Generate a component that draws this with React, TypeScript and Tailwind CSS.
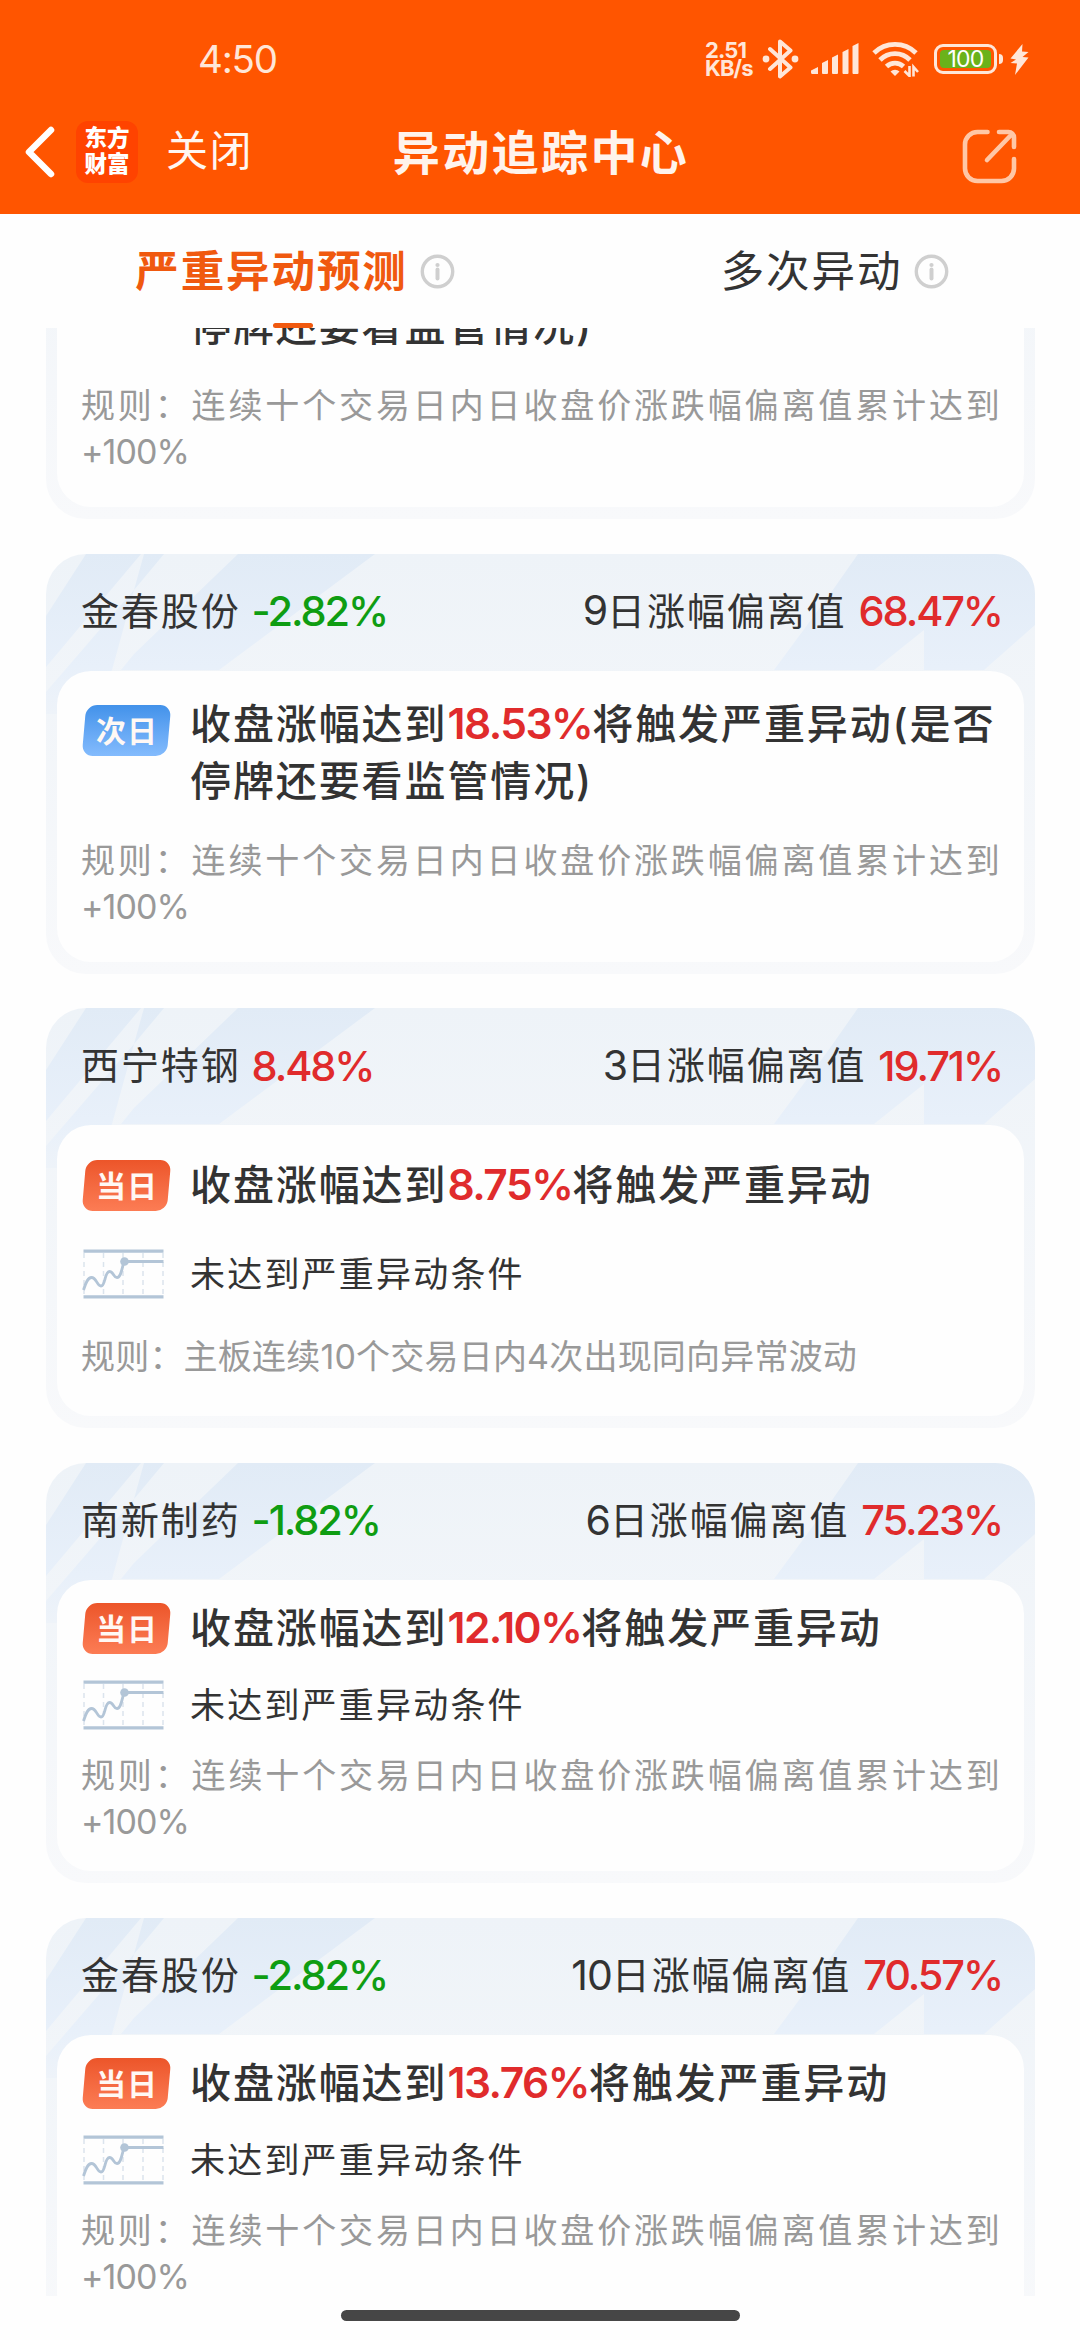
import { useState } from 'react';

type Layout = 'wrapped' | 'loose' | 'tight';

interface Alert {
  id: number;
  name: string;
  change: string;
  days: number;
  deviation: string;
  day: '当日' | '次日';
  target: string;
  suffix: string;
  status?: string;
  rule: string;
  threshold?: string;
  layout: Layout;
}

const RULE_TEN_DAYS = '连续十个交易日内日收盘价涨跌幅偏离值累计达到';

const alerts: Alert[] = [
  {
    id: 1,
    name: '金春股份',
    change: '-2.82%',
    days: 9,
    deviation: '68.47%',
    day: '次日',
    target: '18.53%',
    suffix: '将触发严重异动(是否停牌还要看监管情况)',
    rule: RULE_TEN_DAYS,
    threshold: '+100%',
    layout: 'wrapped',
  },
  {
    id: 2,
    name: '金春股份',
    change: '-2.82%',
    days: 9,
    deviation: '68.47%',
    day: '次日',
    target: '18.53%',
    suffix: '将触发严重异动(是否停牌还要看监管情况)',
    rule: RULE_TEN_DAYS,
    threshold: '+100%',
    layout: 'wrapped',
  },
  {
    id: 3,
    name: '西宁特钢',
    change: '8.48%',
    days: 3,
    deviation: '19.71%',
    day: '当日',
    target: '8.75%',
    suffix: '将触发严重异动',
    status: '未达到严重异动条件',
    rule: '主板连续10个交易日内4次出现同向异常波动',
    layout: 'loose',
  },
  {
    id: 4,
    name: '南新制药',
    change: '-1.82%',
    days: 6,
    deviation: '75.23%',
    day: '当日',
    target: '12.10%',
    suffix: '将触发严重异动',
    status: '未达到严重异动条件',
    rule: RULE_TEN_DAYS,
    threshold: '+100%',
    layout: 'tight',
  },
  {
    id: 5,
    name: '金春股份',
    change: '-2.82%',
    days: 10,
    deviation: '70.57%',
    day: '当日',
    target: '13.76%',
    suffix: '将触发严重异动',
    status: '未达到严重异动条件',
    rule: RULE_TEN_DAYS,
    threshold: '+100%',
    layout: 'tight',
  },
];

const bodyLayout: Record<Layout, string> = {
  wrapped: 'gap-[28px] pt-[25px]',
  loose: 'gap-[35px] pt-[32px]',
  tight: 'gap-[23px] pt-[20px]',
};

export default function App() {
  const [tab, setTab] = useState<'severe' | 'multiple'>('severe');

  return (
    <div className="flex h-[2340px] w-[1080px] flex-col overflow-hidden bg-[#fefefe] font-['Inter','Noto_Sans_CJK_SC',sans-serif] text-[#333333]">
      <header className="h-[214px] bg-[#ff5500]">
        <StatusBar />
        <NavBar />
      </header>

      <nav className="relative z-10 grid h-[114px] grid-cols-2">
        <TabButton label="严重异动预测" active={tab === 'severe'} onClick={() => setTab('severe')} />
        <TabButton label="多次异动" active={tab === 'multiple'} onClick={() => setTab('multiple')} />
      </nav>

      <main className="h-[1968px] overflow-hidden pl-[46px] pr-[45px]">
        <div className="-mt-[229px] flex flex-col gap-[34.7px]">
          {alerts.map((a) => (
            <AlertCard key={a.id} alert={a} />
          ))}
        </div>
      </main>

      <footer className="flex justify-center pt-[14px]">
        <div className="h-[11px] w-[399px] rounded-full bg-[#464646]" />
      </footer>
    </div>
  );
}

function StatusBar() {
  return (
    <div className="flex h-[116px] items-center pl-[198px] pr-[51px] pt-[2px] text-[#ffe6d8]">
      <span className="text-[38.500px] leading-none tracking-[-1.200px]">4:50</span>
      <div className="ml-auto flex items-center">
        <div className="flex w-[57px] flex-col text-[22px] font-bold leading-[18px] tracking-[-0.900px]">
          <span>2.51</span>
          <span>KB/s</span>
        </div>
        <BluetoothIcon />
        <SignalIcon />
        <WifiIcon />
        <div className="ml-[14px] flex h-[30px] w-[63px] items-center rounded-[9px] border-[3px] border-current p-[3px]">
          <div className="flex h-full w-full items-center justify-center rounded-[4px] bg-[#6ab21a] text-[23px] leading-none tracking-[-0.800px] text-white">
            100
          </div>
        </div>
        <div className="ml-[2px] h-[10px] w-[4px] rounded-r-full bg-current" />
        <svg className="ml-[7px]" width="19" height="31" viewBox="0 0 19 31" fill="currentColor">
          <path d="M12.500 0 .500 14.500l5.500 1L.500 19l6.500.500L5 31 18.500 13.500l-6-.500L18.500 8l-6.500-.500z" />
        </svg>
      </div>
    </div>
  );
}

function NavBar() {
  return (
    <div className="grid h-[76px] grid-cols-[1fr_auto_1fr] items-center pl-[25px] pr-[63px]">
      <div className="-mt-[4px] flex items-center">
        <svg width="30" height="52" viewBox="0 0 30 52" fill="none" stroke="#fff" strokeWidth="6.500" strokeLinecap="round" strokeLinejoin="round">
          <path d="M26 4 4 26l22 22" />
        </svg>
        <div className="ml-[21px] flex h-[62px] w-[62px] flex-col items-center justify-center rounded-[12px] bg-[#ff4300] pb-[2px] text-[22.500px] font-black leading-[26px] text-white">
          <span>东方</span>
          <span>财富</span>
        </div>
        <button type="button" className="-mt-[2px] ml-[28px] text-[42px] leading-none tracking-[1.400px] text-[#fff6f0]">
          关闭
        </button>
      </div>
      <h1 className="-mt-[4px] translate-x-[20px] text-[47px] font-bold leading-none tracking-[2.400px] text-[#fff3ec]">
        异动追踪中心
      </h1>
      <svg className="mt-[5px] justify-self-end" width="55" height="55" viewBox="0 0 55 55" fill="none" stroke="#ffc7a6" strokeWidth="4.600" strokeLinecap="round" strokeLinejoin="round">
        <path d="M25.500 3H15.500A12.500 12.500 0 0 0 3 15.500v24A12.500 12.500 0 0 0 15.500 52h24A12.500 12.500 0 0 0 52 39.500V30" />
        <path d="M37 3h9.500A5.500 5.500 0 0 1 52 8.500V18M50 5 25 31" />
      </svg>
    </div>
  );
}

function TabButton({
  label,
  active,
  onClick,
}: {
  label: string;
  active: boolean;
  onClick: () => void;
}) {
  return (
    <button type="button" onClick={onClick} className="relative flex items-center justify-center pl-[50px]">
      <span
        className={
          active
            ? 'pt-px text-[43.500px] font-bold tracking-[1.900px] text-[#f0590f]'
            : 'pt-px text-[43.500px] tracking-[1.900px] text-[#333333]'
        }
      >
        {label}
      </span>
      <InfoIcon />
      {active && <span className="absolute bottom-0 left-[273px] h-[5px] w-[40px] rounded-full bg-[#f0590f]" />}
    </button>
  );
}

function AlertCard({ alert }: { alert: Alert }) {
  const down = alert.change.startsWith('-');
  return (
    <article className="relative flex h-[420px] shrink-0 flex-col overflow-hidden rounded-[40px] bg-linear-to-b from-[#eef3f8] to-[#f8f9fb] px-[11px] pb-[12px]">
      <CardFacets />
      <div className="relative flex h-[117px] shrink-0 items-center justify-between pb-[2px] pl-[24px] pr-[22px] text-[38px]">
        <div className="flex items-center gap-[11px]">
          <span className="tracking-[1.900px]">{alert.name}</span>
          <Percent value={alert.change} className={down ? 'text-[#0f9d12]' : 'text-[#e02b2c]'} />
        </div>
        <div className="flex items-center gap-[12px]">
          <span className="flex items-center tracking-[1.900px]">
            <span className="text-[41px] tracking-[-1px]">{alert.days}</span>日涨幅偏离值
          </span>
          <Percent value={alert.deviation} className="text-[#e02b2c]" />
        </div>
      </div>
      <div className={`relative flex flex-1 flex-col rounded-[34px] bg-[#fefefe] px-[24px] ${bodyLayout[alert.layout]}`}>
        <div className="flex">
          <div className="w-[109px] shrink-0">
            <DayBadge day={alert.day} low={alert.layout === 'wrapped'} />
          </div>
          <p className="w-[816px] shrink-0 text-[41px] font-medium leading-[57px] tracking-[1.900px]">
            收盘涨幅达到
            <span className="text-[42.500px] font-semibold leading-none tracking-[-1.500px] text-[#e02b2c]">{alert.target}</span>
            {alert.suffix}
          </p>
        </div>
        {alert.status && (
          <div className="flex h-[50px] items-center">
            <div className="w-[109px] shrink-0">
              <TrendIcon />
            </div>
            <span className="text-[35px] leading-[50px] tracking-[2.200px]">{alert.status}</span>
          </div>
        )}
        <p className="text-justify text-[34px] leading-[46px] tracking-[0.200px] text-[#999999]">
          规则：{alert.rule}
          {alert.threshold && <span className="tracking-[-0.900px]">{alert.threshold}</span>}
        </p>
      </div>
    </article>
  );
}

function Percent({ value, className }: { value: string; className: string }) {
  return <span className={`text-[41.500px] font-medium tracking-[-2.100px] ${className}`}>{value}</span>;
}

function DayBadge({ day, low }: { day: Alert['day']; low: boolean }) {
  return (
    <div
      className={`ml-[3px] flex h-[51px] w-[85px] -skew-x-[5deg] items-center justify-center rounded-[11px] bg-linear-to-b ${
        day === '次日' ? 'from-[#4292ea] to-[#83bbfd]' : 'from-[#ec5529] to-[#fc7c54]'
      } ${low ? 'mt-[9px]' : 'mt-[3px]'}`}
    >
      <span className="skew-x-[5deg] text-[30px] font-bold leading-none tracking-[1px] text-[#fff8f4]">{day}</span>
    </div>
  );
}

// Angled pale-blue panes behind the card header.
function CardFacets() {
  return (
    <svg className="absolute left-0 top-0" width="989" height="160" viewBox="0 0 989 160">
      <defs>
        <linearGradient id="pane" x1="0" y1="0" x2="0" y2="160" gradientUnits="userSpaceOnUse">
          <stop offset="0" stopColor="#e1ebf6" />
          <stop offset="0.7" stopColor="#e8f0fa" />
          <stop offset="1" stopColor="#eef3f9" />
        </linearGradient>
      </defs>
      <g fill="url(#pane)">
        <path d="M40 0h55L0 113V62z" />
        <path d="M98 0h20L88 36z" />
        <path d="M88 36 66 116 40 160H0v-22z" />
        <path d="M192 0h137L173 116H75l13-16z" />
        <path d="M812 0h177v71l-51 45h-60V76l-50 40H728l56-76z" />
      </g>
    </svg>
  );
}

function InfoIcon() {
  return (
    <svg className="ml-[12px]" width="35" height="35" viewBox="0 0 35 35" fill="none" stroke="#cfcfcf">
      <circle cx="17.500" cy="17.500" r="15.200" strokeWidth="3.400" />
      <path d="M17.500 15.500v9" strokeWidth="4" strokeLinecap="round" />
      <circle cx="17.500" cy="11" r="2.100" fill="#cfcfcf" stroke="none" />
    </svg>
  );
}

function TrendIcon() {
  return (
    <svg className="ml-px" width="84" height="50" viewBox="0 0 84 50" fill="none" stroke="#b3c5d7">
      <path d="M2 4v42M21.500 4v42M41 4v42M61 4v42M81 4v42" stroke="#dbe4ed" strokeWidth="1.500" strokeDasharray="5 4" />
      <path d="M1.500 2.200h80M1.500 47.800h80" strokeWidth="3.200" />
      <path d="M1.500 41C4 33 6 28.500 9.500 28.500c5 0 5.500 8.500 9.500 8.500 4.500 0 3.500-14.500 8.500-14.500 4 0 4 6 7.500 6C39 28.500 40 19 42 12.500h39.500" strokeWidth="2.800" />
      <circle cx="42.500" cy="12.500" r="4.300" fill="#b3c5d7" stroke="none" />
    </svg>
  );
}

function BluetoothIcon() {
  return (
    <svg width="37" height="40" viewBox="0 0 37 40" fill="none" stroke="currentColor" strokeWidth="4" strokeLinejoin="round" strokeLinecap="round">
      <path d="m8 10 20.500 18.500L18 37.500v-35L28.500 11.500 8 30" />
      <circle cx="4" cy="20" r="3.400" fill="currentColor" stroke="none" />
      <circle cx="33" cy="20" r="3.400" fill="currentColor" stroke="none" />
    </svg>
  );
}

function SignalIcon() {
  return (
    <svg className="ml-[12px]" width="49" height="32" viewBox="0 0 49 32" fill="currentColor">
      <path d="M0 27.500 7 24v7H1.500A1.500 1.500 0 0 1 0 29.500zM11 20l6-3v13a1 1 0 0 1-1 1h-4a1 1 0 0 1-1-1zM21 14.500l6-3V30a1 1 0 0 1-1 1h-4a1 1 0 0 1-1-1zM31.500 9l6-3v24a1 1 0 0 1-1 1h-4a1 1 0 0 1-1-1zM41.500 3l6-3v30a1 1 0 0 1-1 1h-4a1 1 0 0 1-1-1z" />
    </svg>
  );
}

function WifiIcon() {
  return (
    <svg className="ml-[12px]" width="48" height="36" viewBox="0 0 48 36" fill="none" stroke="currentColor" strokeWidth="4.800">
      <path d="M2 12a30 30 0 0 1 42 0" />
      <path d="M8 19a21 21 0 0 1 30 0" />
      <path d="M14.500 25.500a12.500 12.500 0 0 1 17 0" />
      <path d="m18.500 30.500 4.500 4.500 4.500-4.500a6.500 6.500 0 0 0-9 0z" fill="currentColor" stroke="none" />
      <path d="M37.500 25v10L32.500 30M41.500 35.500v-9.500l4.500 5" strokeWidth="2.600" />
    </svg>
  );
}
